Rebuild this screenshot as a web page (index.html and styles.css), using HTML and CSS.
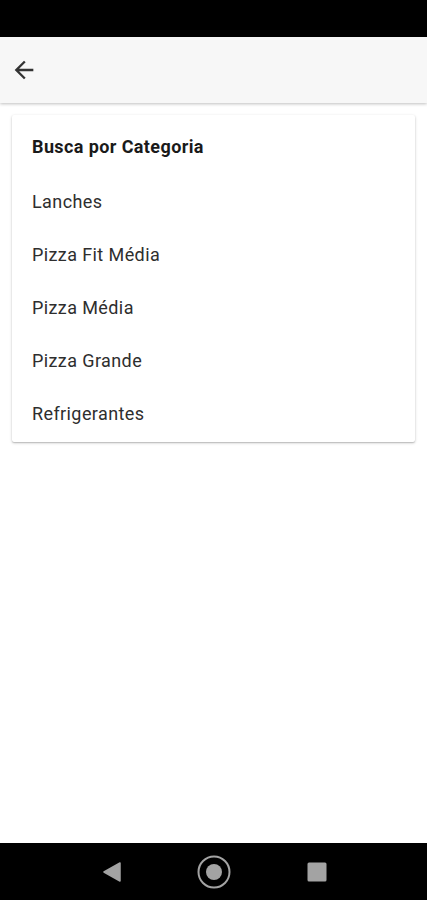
FILE: index.html
```html
<!DOCTYPE html>
<html lang="pt-BR">

<head>
    <meta charset="UTF-8">
    <meta name="viewport" content="width=device-width, initial-scale=1.0">
    <title>Busca por Categoria</title>
    <link rel="stylesheet" href="styles.css">
</head>

<body>
    <div class="phone">
        <div class="status-bar"></div>

        <header class="app-bar">
            <button class="back" aria-label="Voltar">
                <svg width="28" height="28" viewBox="0 0 24 24">
                    <path d="M20 11H7.83l5.59-5.59L12 4l-8 8 8 8 1.41-1.41L7.83 13H20v-2z" fill="#333" />
                </svg>
            </button>
        </header>

        <main class="content">
            <div class="card">
                <h2 class="card-title">Busca por Categoria</h2>
                <ul class="category-list">
                    <li>Lanches</li>
                    <li>Pizza Fit Média</li>
                    <li>Pizza Média</li>
                    <li>Pizza Grande</li>
                    <li>Refrigerantes</li>
                </ul>
            </div>
        </main>

        <nav class="nav-bar">
            <svg width="18" height="20" viewBox="0 0 18 20">
                <path d="M17 1 L1 10 L17 19 Z" fill="#a3a3a3" stroke="#a3a3a3" stroke-width="1.5" stroke-linejoin="round" />
            </svg>
            <svg width="34" height="34" viewBox="0 0 34 34">
                <circle cx="17" cy="17" r="15.5" fill="none" stroke="#a3a3a3" stroke-width="2" />
                <circle cx="17" cy="17" r="8" fill="#a3a3a3" />
            </svg>
            <svg width="20" height="20" viewBox="0 0 20 20">
                <rect x="0.5" y="0.5" width="19" height="19" rx="1.5" fill="#a3a3a3" />
            </svg>
        </nav>
    </div>
</body>

</html>
```

FILE: styles.css
```css
* {
    box-sizing: border-box;
}

body {
    margin: 0;
    font-family: Roboto, "Noto Sans", sans-serif;
    color: #212121;
    background: #fff;
}

.phone {
    width: 427px;
    height: 900px;
    display: flex;
    flex-direction: column;
    overflow: hidden;
}

.status-bar {
    height: 37px;
    background: #000;
    flex-shrink: 0;
}

.app-bar {
    height: 66px;
    flex-shrink: 0;
    background: #f7f7f7;
    display: flex;
    align-items: center;
    padding-left: 10px;
    box-shadow: 0 1px 3px rgba(0, 0, 0, 0.25);
    position: relative;
    z-index: 2;
}

.back {
    border: 0;
    background: none;
    padding: 0;
    width: 28px;
    height: 28px;
    display: flex;
}

.content {
    flex: 1;
    padding: 12px 12px 0;
}

.card {
    background: #fff;
    border-radius: 2px;
    box-shadow: 0 1px 3px rgba(0, 0, 0, 0.22), 0 1px 1px rgba(0, 0, 0, 0.12);
    padding: 18px 20px 2px;
}

.card-title {
    margin: 0;
    font-size: 18px;
    font-weight: 700;
    letter-spacing: 0.4px;
    line-height: 28px;
    color: #1a1a1a;
}

.category-list {
    list-style: none;
    margin: 0;
    padding: 14px 0 0;
}

.category-list li {
    font-size: 18px;
    letter-spacing: 0.4px;
    line-height: 53px;
    height: 53px;
    color: #2e2e2e;
}

.nav-bar {
    height: 57px;
    flex-shrink: 0;
    background: #000;
    display: flex;
    align-items: center;
    justify-content: center;
    gap: 76px;
    padding-left: 2px;
}
```
